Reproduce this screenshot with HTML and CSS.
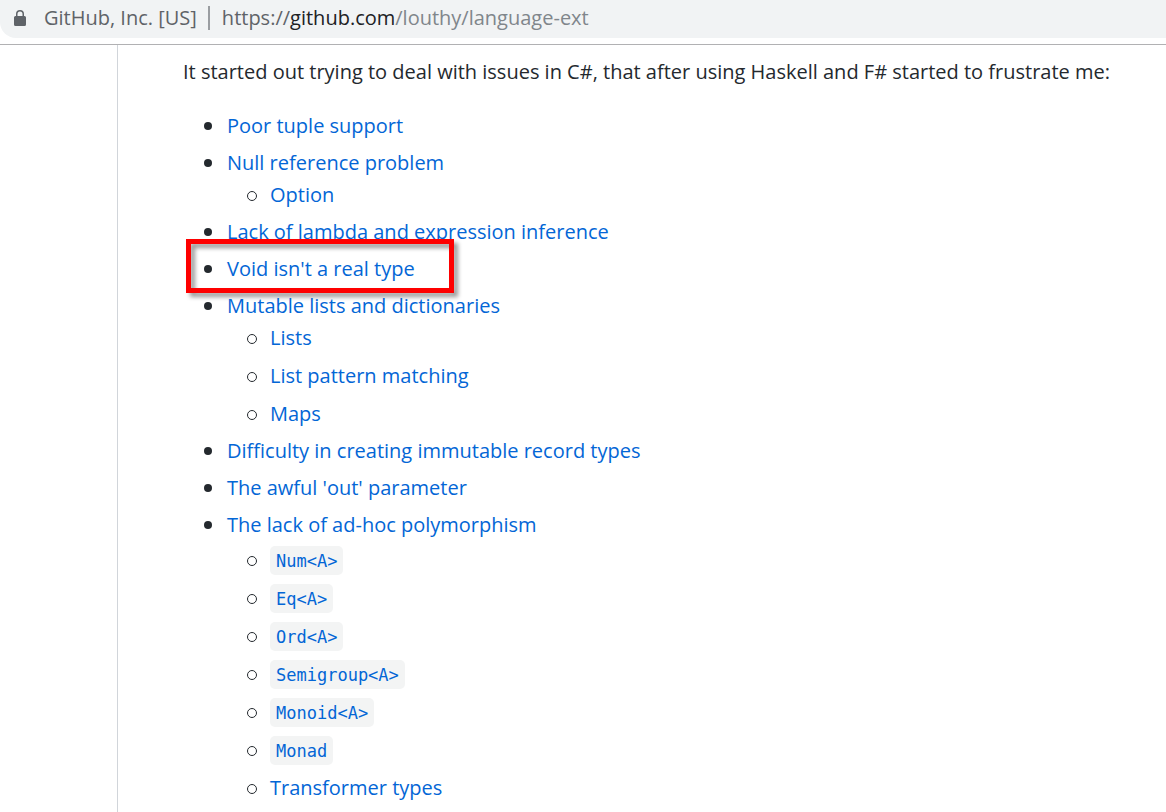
FILE: index.html
```html
<!DOCTYPE html>
<html lang="en">
<head>
<meta charset="utf-8">
<title>louthy/language-ext</title>
<link rel="stylesheet" href="styles.css">
</head>
<body>
<header class="toolbar">
  <div class="address">
    <svg class="lock" viewBox="0 0 12 16" aria-hidden="true"><path fill="#5f6368" fill-rule="evenodd" d="M2 6V4a4 4 0 0 1 8 0v2h.5A1.5 1.5 0 0 1 12 7.500v7A1.500 1.500 0 0 1 10.500 16h-9A1.500 1.500 0 0 1 0 14.500v-7A1.500 1.500 0 0 1 1.500 6zM3.500 6h5V4a2.500 2.500 0 0 0-5 0z"/></svg>
    <span class="owner">GitHub, Inc. [US]</span>
    <span class="divider"></span>
    <span class="url">https://<span class="host">github.com</span><span class="path">/louthy/language-ext</span></span>
  </div>
</header>
<main class="page">
  <article class="readme">
    <p class="intro">It started out trying to deal with issues in C#, that after using Haskell and F# started to frustrate me:</p>
    <ul class="topics">
      <li><a href="#tuple">Poor tuple support</a></li>
      <li><a href="#null">Null reference problem</a>
        <ul class="subtopics">
          <li><a href="#option">Option</a></li>
        </ul>
      </li>
      <li><a href="#lambda">Lack of lambda and expression inference</a></li>
      <li class="marked"><a href="#void">Void isn't a real type</a></li>
      <li><a href="#mutable">Mutable lists and dictionaries</a>
        <ul class="subtopics">
          <li><a href="#lists">Lists</a></li>
          <li><a href="#matching">List pattern matching</a></li>
          <li><a href="#maps">Maps</a></li>
        </ul>
      </li>
      <li><a href="#records">Difficulty in creating immutable record types</a></li>
      <li><a href="#out">The awful 'out' parameter</a></li>
      <li><a href="#adhoc">The lack of ad-hoc polymorphism</a>
        <ul class="subtopics types">
          <li><a href="#num"><code>Num&lt;A&gt;</code></a></li>
          <li><a href="#eq"><code>Eq&lt;A&gt;</code></a></li>
          <li><a href="#ord"><code>Ord&lt;A&gt;</code></a></li>
          <li><a href="#semigroup"><code>Semigroup&lt;A&gt;</code></a></li>
          <li><a href="#monoid"><code>Monoid&lt;A&gt;</code></a></li>
          <li><a href="#monad"><code>Monad</code></a></li>
          <li><a href="#transformer">Transformer types</a></li>
        </ul>
      </li>
    </ul>
  </article>
</main>
</body>
</html>
```
FILE: styles.css
```css
*, *::before, *::after { box-sizing: border-box; }
html, body { height: 100%; }
body {
  margin: 0;
  display: flex;
  flex-direction: column;
  overflow: hidden;
  background: #fff;
  color: #24292e;
  font: 20px/32px "Open Sans", "Noto Sans", sans-serif;
}
.toolbar {
  flex: none;
  padding-bottom: 6px;
  border-bottom: 1px solid #b1b1b3;
}
.address {
  display: flex;
  align-items: center;
  height: 38px;
  padding: 0 14px 2px;
  background: #f1f3f4;
  border-bottom-left-radius: 16px;
  color: #5f6368;
  white-space: nowrap;
}
.lock { width: 12px; height: 16px; margin-right: 18px; }
.divider { width: 2px; height: 24px; margin: 0 12px 0 11px; background: #9a9da1; }
.host { color: #202124; }
.path { color: #80868b; }
.page {
  flex: 1;
  min-height: 0;
  margin-left: 117px;
  padding: 11px 32px 0 65px;
  border-left: 1px solid #d1d5da;
}
.intro { margin: 0 0 22px; white-space: nowrap; }
.topics, .subtopics { margin: 0; padding: 0; list-style: none; }
.topics { padding-left: 44px; }
.subtopics { padding-left: 43px; }
.topics > li + li { margin-top: 5px; }
.subtopics > li + li { margin-top: 6px; }
.types { padding-top: 3px; }
li { position: relative; }
li::before {
  content: "";
  position: absolute;
  top: 12px;
  left: -23px;
  width: 8px;
  height: 8px;
  border-radius: 50%;
  background: #24292e;
}
.subtopics > li::before {
  width: 10px;
  height: 10px;
  border: 1px solid #24292e;
  background: none;
}
a { color: #0366d6; text-decoration: none; }
code {
  padding: 5px 6px 4px;
  border-radius: 5px;
  background: #f3f4f4;
  font: 17px/20px "DejaVu Sans Mono", monospace;
}
.marked::after {
  content: "";
  position: absolute;
  top: -14px;
  left: -41px;
  width: 268px;
  height: 54px;
  border: 5px solid #fe0000;
  filter: drop-shadow(4px 4px 2px rgba(0, 0, 0, 0.4));
  pointer-events: none;
}
```
